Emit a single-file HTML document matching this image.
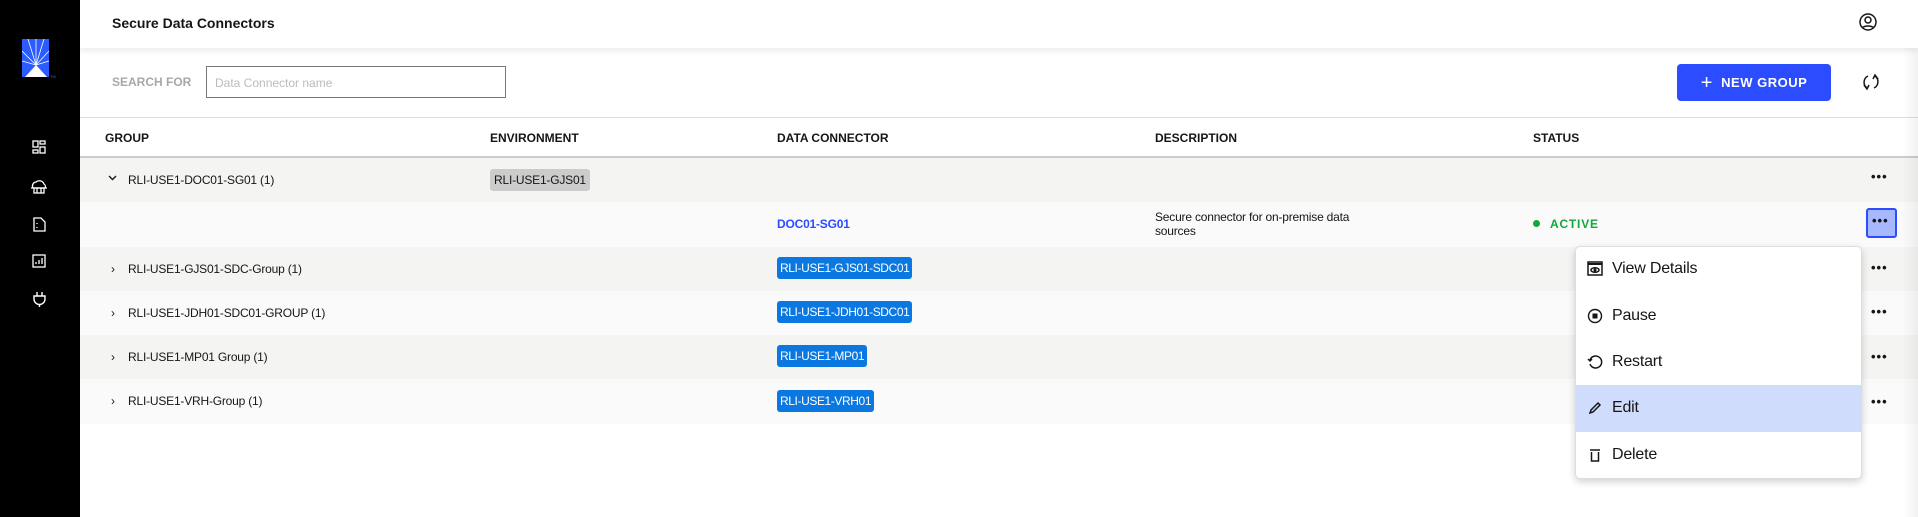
<!DOCTYPE html>
<html><head><style>
*{box-sizing:border-box;margin:0;padding:0}
body{width:1918px;height:517px;overflow:hidden;background:#fff;font-family:"Liberation Sans",sans-serif;color:#161616;position:relative}
.a{position:absolute}
.side{left:0;top:0;width:80px;height:517px;background:#000}
.hdr{left:80px;top:0;width:1838px;height:48px;background:#fff;box-shadow:0 3px 6px rgba(0,0,0,.08);z-index:2}
.row{left:80px;width:1838px;height:45px}
.g{background:#f4f4f2}.l{background:#fafafa}
.t{font-size:12px;line-height:14px;letter-spacing:-0.2px}
.hd{font-size:12px;font-weight:bold;top:131px}
.chip{background:#0a78e0;color:#fff;border-radius:3px;padding:0 3px;height:22px;line-height:22px;font-size:12px;letter-spacing:-0.4px}
.dots{font-size:13px;font-weight:bold;letter-spacing:1px}
.mi{left:1575px;width:287px;height:46px;font-size:16px;line-height:46px;padding-left:37px;letter-spacing:-0.2px}
.mi svg{position:absolute;left:12px;top:15px}
</style></head><body>
<div class="a side">
 <svg class="a" style="left:22px;top:39px" width="34" height="40" viewBox="0 0 34 40"><rect x="0" y="0" width="27" height="38" fill="#2c5bff"/><g stroke="#fff" stroke-width="0.8"><line x1="14" y1="26" x2="0" y2="12"/><line x1="14" y1="26" x2="6" y2="0"/><line x1="14" y1="26" x2="14" y2="0"/><line x1="14" y1="26" x2="22" y2="0"/><line x1="14" y1="26" x2="27" y2="12"/><line x1="14" y1="26" x2="0" y2="22"/><line x1="14" y1="26" x2="27" y2="22"/></g><polygon points="14,26 3,38 25,38" fill="#fff"/><text x="28" y="39" font-size="4" fill="#2c5bff" font-family="Liberation Sans">TM</text></svg>
 <svg class="a" style="left:32px;top:140px" width="14" height="14" viewBox="0 0 14 14" fill="none" stroke="#fff" stroke-width="1.3"><rect x="1" y="1" width="5" height="6"/><rect x="8" y="1" width="5" height="3"/><rect x="1" y="10" width="5" height="3"/><rect x="8" y="7" width="5" height="6"/></svg>
 <svg class="a" style="left:30px;top:179px" width="18" height="16" viewBox="0 0 18 16" fill="none" stroke="#fff" stroke-width="1.3"><path d="M3 9a4 4 0 0 1 3-6 5 5 0 0 1 8 2 3 3 0 0 1 1 4"/><line x1="1" y1="9" x2="17" y2="9"/><rect x="4" y="9" width="10" height="5"/><line x1="7" y1="9" x2="7" y2="14"/><line x1="11" y1="9" x2="11" y2="14"/></svg>
 <svg class="a" style="left:33px;top:217px" width="13" height="15" viewBox="0 0 13 15" fill="none" stroke="#fff" stroke-width="1.3"><path d="M1 1h7l4 4v9H1z"/><line x1="4" y1="6" x2="4" y2="7"/><line x1="4" y1="10" x2="4" y2="11"/></svg>
 <svg class="a" style="left:32px;top:254px" width="14" height="14" viewBox="0 0 14 14" fill="none" stroke="#fff" stroke-width="1.3"><rect x="1" y="1" width="12" height="12"/><line x1="4" y1="10" x2="4" y2="8"/><line x1="7" y1="10" x2="7" y2="6"/><line x1="10" y1="10" x2="10" y2="4"/></svg>
 <svg class="a" style="left:33px;top:291px" width="13" height="16" viewBox="0 0 13 16" fill="none" stroke="#fff" stroke-width="1.4"><line x1="4" y1="1" x2="4" y2="5"/><line x1="9" y1="1" x2="9" y2="5"/><path d="M1 5h11v3a5 5 0 0 1-11 0z"/><line x1="6.5" y1="13" x2="6.5" y2="16"/></svg>
</div>
<div class="a hdr">
 <div class="a" style="left:32px;top:15px;font-size:14px;font-weight:bold">Secure Data Connectors</div>
 <svg class="a" style="left:1779px;top:13px" width="18" height="18" viewBox="0 0 18 18" fill="none" stroke="#161616" stroke-width="1.5"><circle cx="9" cy="9" r="8"/><circle cx="9" cy="7" r="3"/><path d="M3.5 14.5a7 4 0 0 1 11 0"/></svg>
</div>
<div class="a" style="left:112px;top:75px;font-size:12px;font-weight:bold;color:#a8a8a8">SEARCH FOR</div>
<div class="a" style="left:206px;top:66px;width:300px;height:32px;border:1px solid #777;font-size:12px;color:#bbb;padding:9px 8px">Data Connector name</div>
<div class="a" style="left:1677px;top:64px;width:154px;height:37px;background:#2b4cff;border-radius:4px;color:#fff;font-size:13px;font-weight:bold;line-height:37px;text-align:center;letter-spacing:.5px"><span style="font-size:20px;font-weight:normal;vertical-align:-2px">+</span>&nbsp; NEW GROUP</div>
<svg class="a" style="left:1862px;top:72px" width="18" height="20" viewBox="0 0 18 20" fill="none" stroke="#161616" stroke-width="1.5"><path d="M6 4a7 7 0 0 0-1 12"/><path d="M2 13l3 4 2-4"/><path d="M12 16a7 7 0 0 0 1-12"/><path d="M16 7l-3-4-2 4"/></svg>
<div class="a" style="left:80px;top:117px;width:1838px;height:1px;background:#ddd"></div>
<div class="a hd" style="left:105px">GROUP</div>
<div class="a hd" style="left:490px">ENVIRONMENT</div>
<div class="a hd" style="left:777px">DATA CONNECTOR</div>
<div class="a hd" style="left:1155px">DESCRIPTION</div>
<div class="a hd" style="left:1533px">STATUS</div>
<div class="a" style="left:80px;top:156px;width:1838px;height:2px;background:#ccc"></div>

<div class="a row g" style="top:158px"></div>
<div class="a row l" style="top:202px"></div>
<div class="a row g" style="top:247px"></div>
<div class="a row l" style="top:291px"></div>
<div class="a row g" style="top:335px"></div>
<div class="a row l" style="top:379px"></div>

<svg class="a" style="left:108px;top:175px" width="9" height="6" viewBox="0 0 9 6" fill="none" stroke="#161616" stroke-width="1.4"><path d="M1 1l3.5 3.5L8 1"/></svg>
<div class="a t" style="left:128px;top:173px">RLI-USE1-DOC01-SG01 (1)</div>
<div class="a t" style="left:490px;top:169px;background:#ccc;border-radius:3px;padding:4px 4px">RLI-USE1-GJS01</div>
<div class="a dots" style="left:1871px;top:169px">•••</div>

<div class="a t" style="left:777px;top:217px;color:#2b4cff;font-weight:bold">DOC01-SG01</div>
<div class="a t" style="left:1155px;top:210px">Secure connector for on-premise data<br>sources</div>
<div class="a" style="left:1533px;top:220px;width:7px;height:7px;border-radius:50%;background:#11a83a"></div>
<div class="a t" style="left:1550px;top:217px;color:#11a83a;font-weight:bold;letter-spacing:.8px">ACTIVE</div>
<div class="a" style="left:1866px;top:208px;width:31px;height:30px;background:#a8b8ff;border:2px solid #2b4cff;border-radius:3px"></div>
<div class="a dots" style="left:1872px;top:213px">•••</div>

<div class="a t" style="left:111px;top:262px">›</div>
<div class="a t" style="left:128px;top:262px">RLI-USE1-GJS01-SDC-Group (1)</div>
<div class="a chip" style="left:777px;top:257px">RLI-USE1-GJS01-SDC01</div>
<div class="a dots" style="left:1871px;top:260px">•••</div>

<div class="a t" style="left:111px;top:306px">›</div>
<div class="a t" style="left:128px;top:306px">RLI-USE1-JDH01-SDC01-GROUP (1)</div>
<div class="a chip" style="left:777px;top:301px">RLI-USE1-JDH01-SDC01</div>
<div class="a dots" style="left:1871px;top:304px">•••</div>

<div class="a t" style="left:111px;top:350px">›</div>
<div class="a t" style="left:128px;top:350px">RLI-USE1-MP01 Group (1)</div>
<div class="a chip" style="left:777px;top:345px">RLI-USE1-MP01</div>
<div class="a dots" style="left:1871px;top:349px">•••</div>

<div class="a t" style="left:111px;top:394px">›</div>
<div class="a t" style="left:128px;top:394px">RLI-USE1-VRH-Group (1)</div>
<div class="a chip" style="left:777px;top:390px">RLI-USE1-VRH01</div>
<div class="a dots" style="left:1871px;top:394px">•••</div>

<div class="a" style="left:1902px;top:0;width:16px;height:517px;background:linear-gradient(90deg,rgba(0,0,0,0),rgba(0,0,0,.05))"></div>

<div class="a" style="left:1575px;top:246px;width:287px;height:233px;background:#fff;border:1px solid #ddd;border-radius:5px;box-shadow:0 3px 8px rgba(0,0,0,.18)"></div>
<div class="a" style="left:1576px;top:385px;width:285px;height:47px;background:#d0dcfb"></div>
<div class="a mi" style="top:246px"><svg width="16" height="16" viewBox="0 0 16 16" fill="none" stroke="#161616" stroke-width="1.5"><rect x="1" y="1" width="14" height="13"/><line x1="1" y1="3" x2="15" y2="3" stroke-width="2"/><ellipse cx="8" cy="9" rx="4" ry="2.3"/><circle cx="8" cy="9" r="0.8" fill="#161616"/></svg>View Details</div>
<div class="a mi" style="top:293px"><svg width="16" height="16" viewBox="0 0 16 16" fill="none" stroke="#161616" stroke-width="1.4"><circle cx="8" cy="8" r="6.5"/><rect x="5.5" y="5.5" width="5" height="5" fill="#161616" stroke="none"/></svg>Pause</div>
<div class="a mi" style="top:339px"><svg width="16" height="16" viewBox="0 0 16 16" fill="none" stroke="#161616" stroke-width="1.5"><path d="M3 6a6 6 0 1 1 0 4"/><path d="M1 5l2 2 2-2"/></svg>Restart</div>
<div class="a mi" style="top:385px"><svg width="16" height="16" viewBox="0 0 16 16" fill="none" stroke="#161616" stroke-width="1.5"><path d="M3 13l1-3 7-7 2 2-7 7z"/></svg>Edit</div>
<div class="a mi" style="top:432px"><svg width="16" height="16" viewBox="0 0 16 16" fill="none" stroke="#161616" stroke-width="1.5"><line x1="3" y1="3" x2="13" y2="3"/><path d="M4.5 5v9h7V5"/></svg>Delete</div>
</body></html>
